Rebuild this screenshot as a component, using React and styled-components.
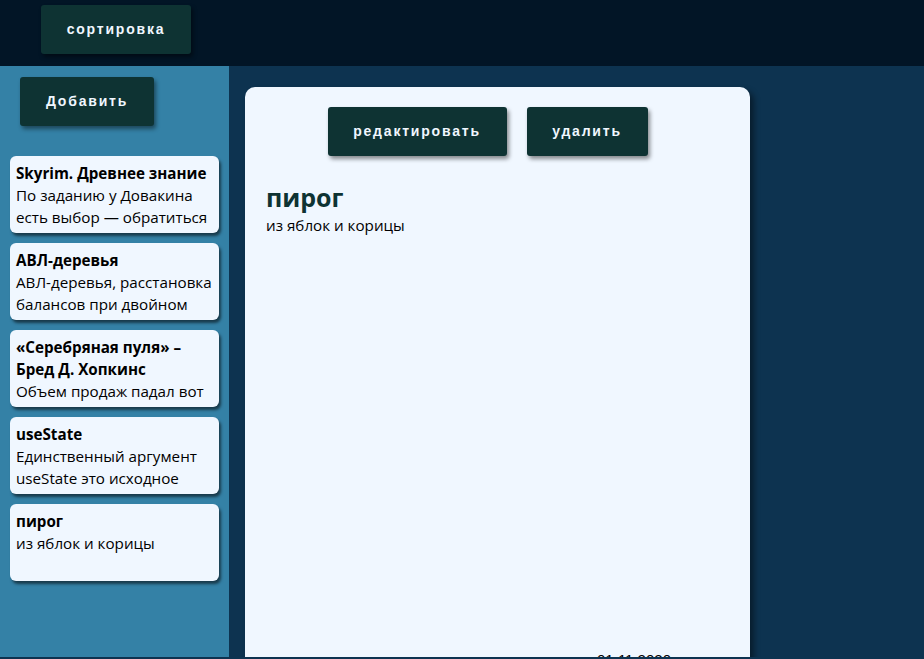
import React from "react";
import styled, { createGlobalStyle } from "styled-components";

const notes = [
  {
    id: 1,
    title: "Skyrim. Древнее знание",
    body: "По заданию у Довакина есть выбор — обратиться к Септимию или искать свиток самому",
  },
  {
    id: 2,
    title: "АВЛ-деревья",
    body: "АВЛ-деревья, расстановка балансов при двойном повороте",
  },
  {
    id: 3,
    title: "«Серебряная пуля» – Бред Д. Хопкинс",
    body: "Объем продаж падал вот уже который квартал",
  },
  {
    id: 4,
    title: "useState",
    body: "Единственный аргумент useState это исходное состояние",
  },
  { id: 5, title: "пирог", body: "из яблок и корицы" },
];

const GlobalStyle = createGlobalStyle`
  * { box-sizing: border-box; }
  html, body {
    margin: 0;
    padding: 0;
    height: 100%;
    overflow: hidden;
    background: #0d3350;
    font-family: "Open Sans", "Noto Sans", sans-serif;
  }
`;

const Page = styled.div`
  display: flex;
  flex-direction: column;
  height: 657px;
`;

const Header = styled.header`
  height: 66px;
  flex-shrink: 0;
  background: #021526;
  padding: 5px 0 0 41px;
`;

const Button = styled.button`
  height: 49px;
  width: ${(p) => p.$w}px;
  border: none;
  border-radius: 3px;
  background: #0e3333;
  color: #f0f7ff;
  font-family: "Liberation Sans", Arial, sans-serif;
  font-weight: bold;
  font-size: 14px;
  letter-spacing: 1.8px;
  padding: 0 0 2px 0;
  box-shadow: 2px 3px 4px rgba(0, 0, 0, 0.45);
  cursor: pointer;
`;

const Body = styled.div`
  flex: 1;
  display: grid;
  grid-template-columns: 229px 1fr;
  min-height: 0;
`;

const Sidebar = styled.aside`
  background: #3481a6;
  padding: 11px 10px 0 10px;
  display: flex;
  flex-direction: column;
  overflow: hidden;
`;

const AddRow = styled.div`
  padding-left: 10px;
  margin-bottom: 30px;
`;

const NoteList = styled.div`
  display: flex;
  flex-direction: column;
  gap: 10px;
`;

const NoteCard = styled.div`
  height: 77px;
  overflow: hidden;
  background: #f0f7ff;
  border-radius: 6px;
  padding: 6px 5px 0 6px;
  box-shadow: 2px 3px 3px rgba(0, 0, 0, 0.55);
  color: #000;
  font-size: 15.2px;
  line-height: 22px;
`;

const NoteTitle = styled.div`
  font-weight: bold;
`;

const Main = styled.main`
  background: #0d3350;
  padding: 21px 0 0 16px;
  overflow: hidden;
`;

const Detail = styled.section`
  width: 505px;
  height: 591px;
  background: #f0f7ff;
  border-radius: 10px;
  box-shadow: 4px 4px 6px rgba(0, 0, 0, 0.45);
  padding: 20px 21px 0 21px;
  display: flex;
  flex-direction: column;
`;

const Actions = styled.div`
  display: flex;
  justify-content: center;
  gap: 20px;
  padding-right: 20px;
`;

const DetailTitle = styled.h2`
  margin: 24px 0 0 0;
  font-size: 25px;
  line-height: 34px;
  font-weight: bold;
  color: #0e3333;
`;

const DetailText = styled.p`
  margin: 0;
  font-size: 15.2px;
  line-height: 22px;
  color: #000;
`;

const DateLine = styled.div`
  margin-top: auto;
  margin-bottom: 10px;
  align-self: flex-end;
  margin-right: 58px;
  font-family: "Liberation Sans", Arial, sans-serif;
  font-size: 15px;
  line-height: 17px;
  color: #000;
`;

export default function App() {
  const current = notes[4];
  return (
    <>
      <GlobalStyle />
      <Page>
        <Header>
          <Button $w={150}>сортировка</Button>
        </Header>
        <Body>
          <Sidebar>
            <AddRow>
              <Button $w={134}>Добавить</Button>
            </AddRow>
            <NoteList>
              {notes.map((n) => (
                <NoteCard key={n.id}>
                  <NoteTitle>{n.title}</NoteTitle>
                  <div>{n.body}</div>
                </NoteCard>
              ))}
            </NoteList>
          </Sidebar>
          <Main>
            <Detail>
              <Actions>
                <Button $w={179}>редактировать</Button>
                <Button $w={121}>удалить</Button>
              </Actions>
              <DetailTitle>{current.title}</DetailTitle>
              <DetailText>{current.body}</DetailText>
              <DateLine>01.11.2020</DateLine>
            </Detail>
          </Main>
        </Body>
      </Page>
    </>
  );
}
